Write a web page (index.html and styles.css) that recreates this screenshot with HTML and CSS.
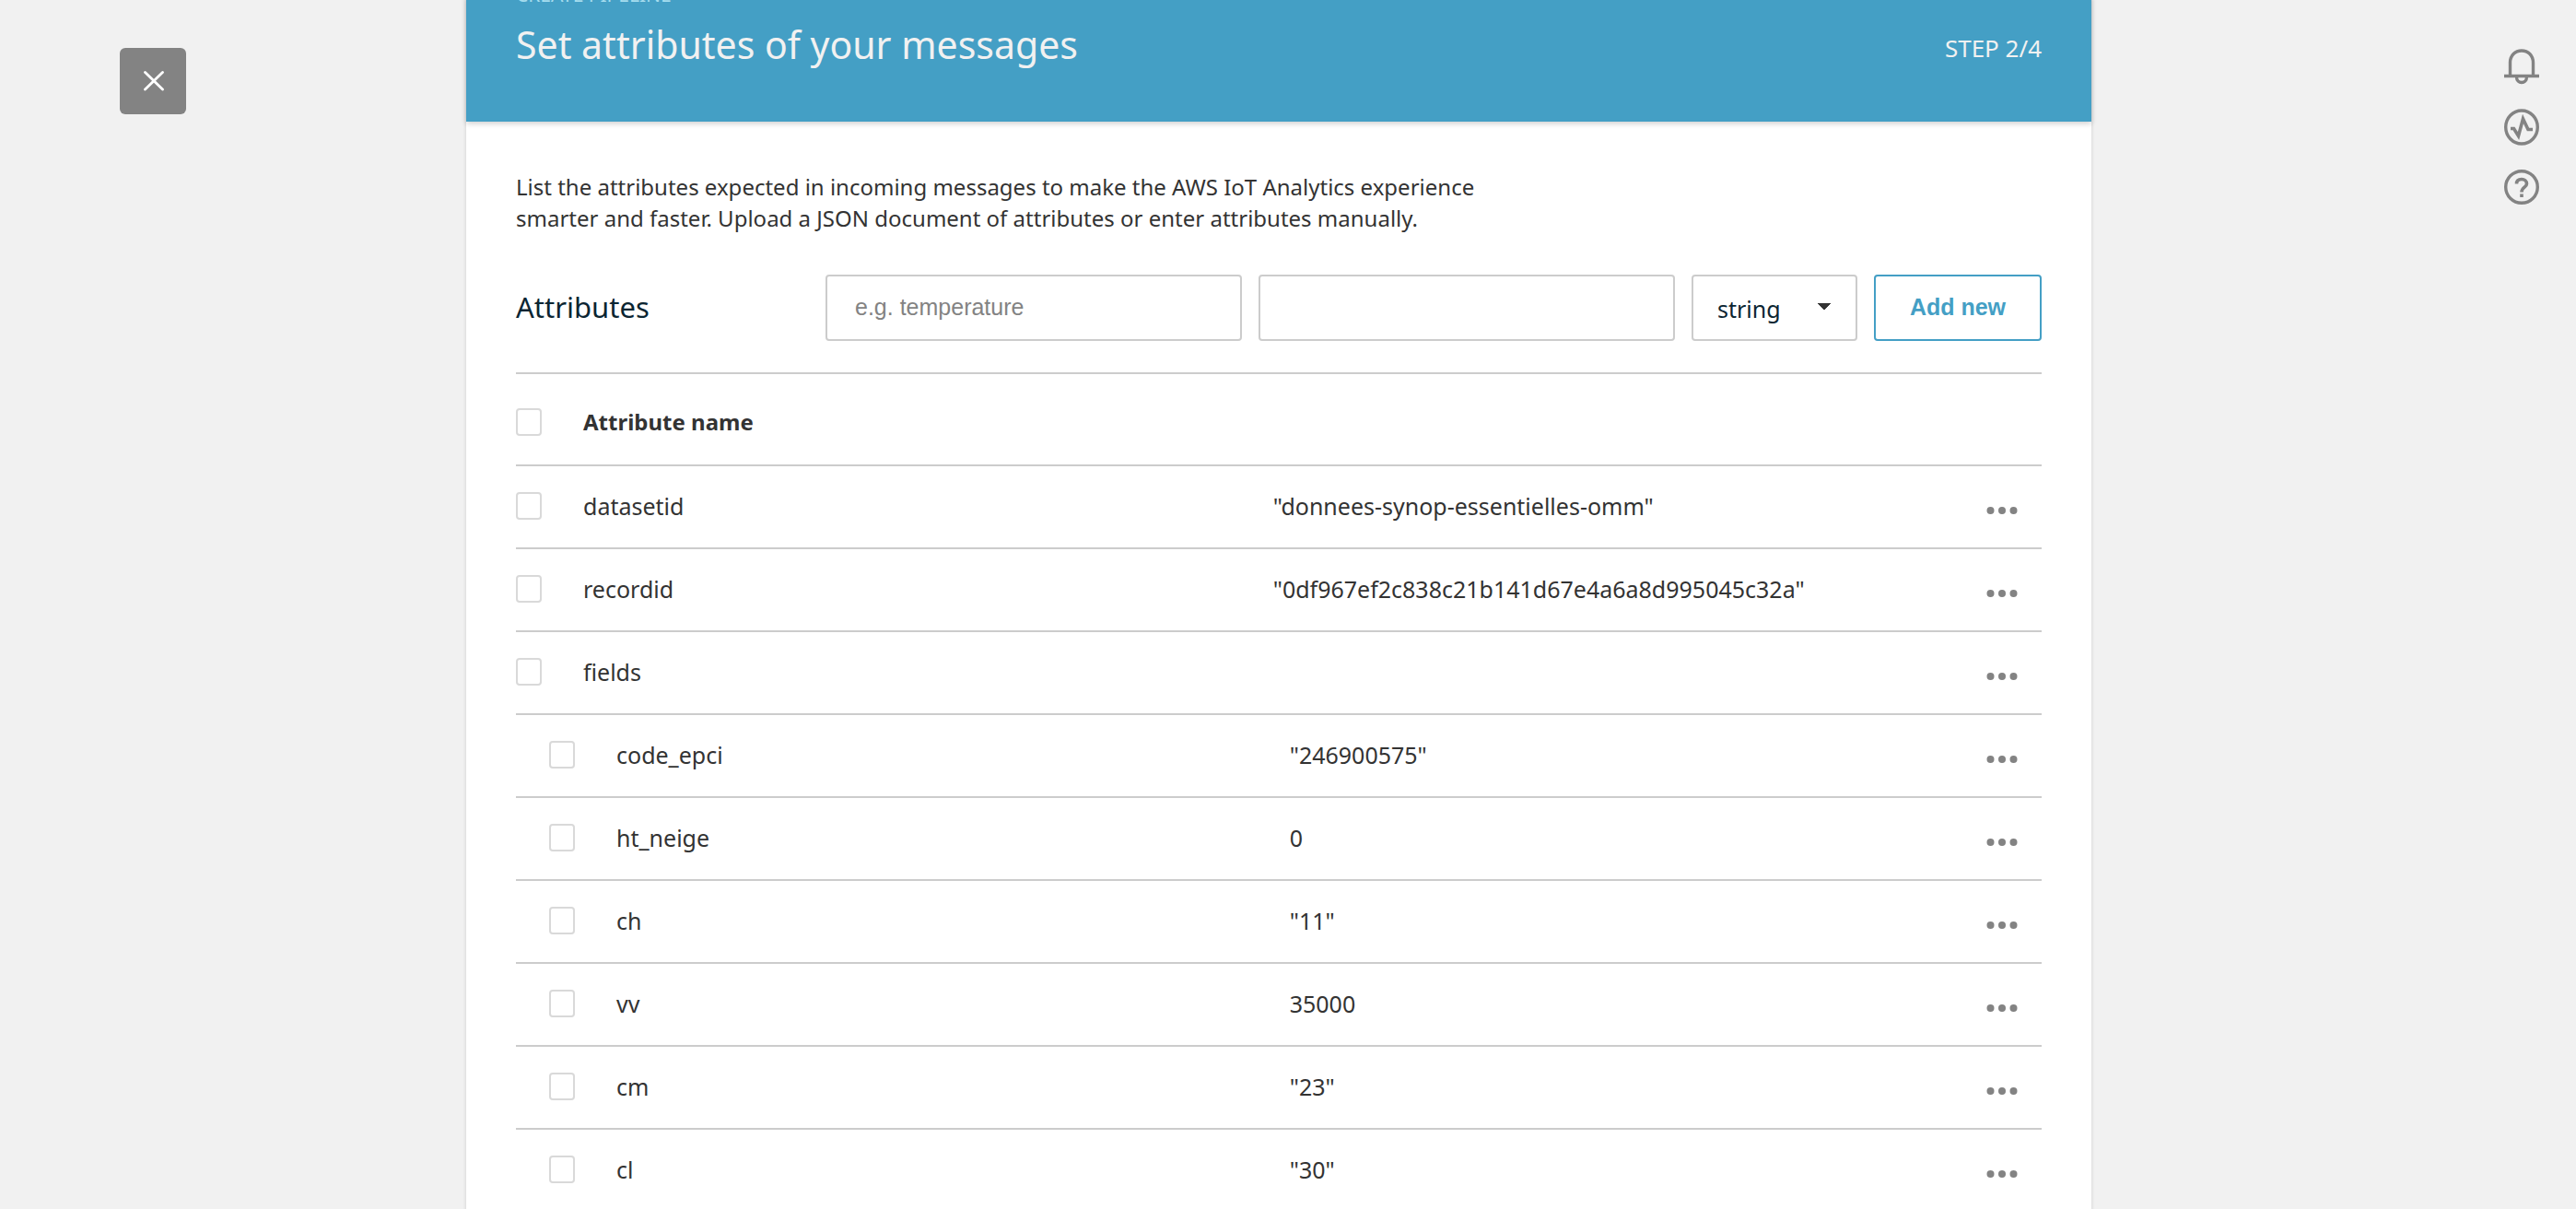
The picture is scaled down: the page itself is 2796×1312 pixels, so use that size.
FILE: index.html
```html
<!DOCTYPE html>
<html lang="en">
<head>
<meta charset="utf-8">
<title>Create pipeline</title>
<link rel="stylesheet" href="styles.css">
</head>
<body>
<div class="page">
  <div class="side">
    <button class="close" type="button" aria-label="Close">
      <svg width="24" height="24" viewBox="0 0 24 24" fill="none" stroke="#fff" stroke-width="2.8" stroke-linecap="round"><path d="M3.500 2.500 22.500 21M22.500 2.500 3.500 21"/></svg>
    </button>
  </div>

  <main class="panel">
    <header class="banner">
      <div>
        <p class="eyebrow">CREATE PIPELINE</p>
        <h1 class="title">Set attributes of your messages</h1>
      </div>
      <span class="step">STEP 2/4</span>
    </header>

    <div class="content">
      <p class="intro">List the attributes expected in incoming messages to make the AWS IoT Analytics experience<br>smarter and faster. Upload a JSON document of attributes or enter attributes manually.</p>

      <form class="form">
        <h2 class="form-title">Attributes</h2>
        <input class="field" type="text" placeholder="e.g. temperature" aria-label="Attribute name">
        <input class="field" type="text" aria-label="Attribute value">
        <select class="type" aria-label="Attribute type"><option>string</option><option>number</option><option>boolean</option></select>
        <button class="add" type="button">Add new</button>
      </form>

      <table class="attributes">
        <colgroup><col><col class="col-value"><col class="col-action"></colgroup>
        <thead>
          <tr><th scope="col"><label class="name"><input class="check" type="checkbox">Attribute name</label></th><th></th><th></th></tr>
        </thead>
        <tbody>
          <tr><td><label class="name"><input class="check" type="checkbox">datasetid</label></td><td>"donnees-synop-essentielles-omm"</td><td><button class="more" type="button" aria-label="Actions for datasetid"><svg width="34" height="10"><use href="#dots"/></svg></button></td></tr>
          <tr><td><label class="name"><input class="check" type="checkbox">recordid</label></td><td>"0df967ef2c838c21b141d67e4a6a8d995045c32a"</td><td><button class="more" type="button" aria-label="Actions for recordid"><svg width="34" height="10"><use href="#dots"/></svg></button></td></tr>
          <tr><td><label class="name"><input class="check" type="checkbox">fields</label></td><td></td><td><button class="more" type="button" aria-label="Actions for fields"><svg width="34" height="10"><use href="#dots"/></svg></button></td></tr>
          <tr class="nested"><td><label class="name"><input class="check" type="checkbox">code_epci</label></td><td>"246900575"</td><td><button class="more" type="button" aria-label="Actions for code_epci"><svg width="34" height="10"><use href="#dots"/></svg></button></td></tr>
          <tr class="nested"><td><label class="name"><input class="check" type="checkbox">ht_neige</label></td><td>0</td><td><button class="more" type="button" aria-label="Actions for ht_neige"><svg width="34" height="10"><use href="#dots"/></svg></button></td></tr>
          <tr class="nested"><td><label class="name"><input class="check" type="checkbox">ch</label></td><td>"11"</td><td><button class="more" type="button" aria-label="Actions for ch"><svg width="34" height="10"><use href="#dots"/></svg></button></td></tr>
          <tr class="nested"><td><label class="name"><input class="check" type="checkbox">vv</label></td><td>35000</td><td><button class="more" type="button" aria-label="Actions for vv"><svg width="34" height="10"><use href="#dots"/></svg></button></td></tr>
          <tr class="nested"><td><label class="name"><input class="check" type="checkbox">cm</label></td><td>"23"</td><td><button class="more" type="button" aria-label="Actions for cm"><svg width="34" height="10"><use href="#dots"/></svg></button></td></tr>
          <tr class="nested"><td><label class="name"><input class="check" type="checkbox">cl</label></td><td>"30"</td><td><button class="more" type="button" aria-label="Actions for cl"><svg width="34" height="10"><use href="#dots"/></svg></button></td></tr>
        </tbody>
      </table>
    </div>
  </main>

  <nav class="tools" aria-label="Tools">
    <button class="tool" type="button" aria-label="Notifications">
      <svg width="40" height="40" viewBox="0 0 40 40" fill="none" stroke="#838383" stroke-width="3.400"><path d="M7.500 30.500V16C7.500 8 13 3 20 3S32.500 8 32.500 16V30.500M1 30.500H39M14.500 31.500C14.500 39.500 25.500 39.500 25.500 31.500"/></svg>
    </button>
    <button class="tool" type="button" aria-label="Activity">
      <svg width="40" height="40" viewBox="0 0 40 40" fill="none" stroke="#838383" stroke-width="3.400"><ellipse cx="20" cy="20" rx="17.300" ry="18"/><path d="M8 21.500H11.500L16.500 29.500 21.500 11 27 22.500H32" stroke-width="3.600"/></svg>
    </button>
    <button class="tool" type="button" aria-label="Help">
      <svg width="40" height="40" viewBox="0 0 40 40" fill="none" stroke="#838383" stroke-width="3.400"><circle cx="20" cy="19" r="17.300"/><path d="M14.500 15.500C14.500 12 17 10.500 20 10.500S25.500 12.500 25.500 15.500C25.500 19.500 20 19 20 24.500M20 26.500V30" stroke-width="3.600"/></svg>
    </button>
  </nav>
</div>

<svg class="defs" aria-hidden="true"><symbol id="dots" viewBox="0 0 34 10"><g fill="#838383"><circle cx="4.500" cy="5" r="4"/><circle cx="17" cy="5" r="4"/><circle cx="29.500" cy="5" r="4"/></g></symbol></svg>
</body>
</html>
```
FILE: styles.css
```css
* { box-sizing: border-box; }

body {
  margin: 0;
  background: #f1f1f1;
  color: #333;
  font: 25px/34px "Noto Sans", sans-serif;
}

h1, h2, p { margin: 0; font-weight: 400; }

button { font: inherit; cursor: pointer; }

.defs { display: none; }

.page {
  display: grid;
  grid-template-columns: 1fr minmax(0, 1764px) 1fr;
  height: 100vh;
  padding-right: 20px;
  overflow: hidden;
}

.side { padding: 52px 0 0 130px; }

.close {
  display: grid;
  place-items: center;
  width: 72px;
  height: 72px;
  padding: 0;
  border: 0;
  border-radius: 6px;
  background: #838383;
}

.panel {
  background: #fff;
  box-shadow: 0 0 4px rgba(0, 0, 0, .15);
}

/* The banner's top edge is scrolled out of view. */
.banner {
  display: flex;
  justify-content: space-between;
  align-items: flex-end;
  margin-top: -54px;
  padding: 28px 54px 50px;
  background: #449fc5;
  color: #f1f1f1;
  box-shadow: 0 2px 6px rgba(0, 0, 0, .2);
}

.eyebrow { color: #a5dcee; font-size: 21px; line-height: 40px; }
.title { font-size: 41px; line-height: 68px; }
.step { font-size: 26px; line-height: 60px; }

.content { padding: 54px 54px 0; }

.intro { font-size: 24px; }

.form {
  display: flex;
  align-items: center;
  gap: 18px;
  margin-top: 44px;
  padding-bottom: 34px;
}

.form-title {
  width: 318px;
  padding-bottom: 2px;
  color: #0b2532;
  font-size: 31px;
  line-height: 40px;
}

.field, .type, .add {
  height: 72px;
  border: 2px solid #ccc;
  border-radius: 4px;
  background: #fff;
}

.field {
  flex: 1;
  min-width: 0;
  padding: 0 30px 2px;
  font: 25px "Liberation Sans", sans-serif;
}

.field::placeholder { color: #838383; }

.type {
  width: 180px;
  padding: 2px 26px 0;
  appearance: none;
  background: #fff conic-gradient(from -41deg at 50% 100%, #333 82deg, transparent 0) no-repeat 135px 29px / 14px 8px;
  color: #0b2532;
  font: inherit;
}

.add {
  width: 182px;
  padding: 0 0 2px;
  border-color: #449fc5;
  color: #449fc5;
  font: bold 25px "Liberation Sans", sans-serif;
}

.attributes {
  width: 100%;
  border-collapse: separate;
  border-spacing: 0;
  table-layout: fixed;
}

.col-value { width: 47%; }
.col-action { width: 60px; }

th, td {
  height: 90px;
  padding: 0 0 2px;
  border-bottom: 2px solid #ccc;
  text-align: left;
}

th {
  height: 102px;
  padding: 6px 0 0;
  border-top: 2px solid #ccc;
  font-size: 24px;
}

.name { display: flex; align-items: center; gap: 45px; }

.check {
  width: 28px;
  height: 30px;
  margin: 0;
  appearance: none;
  border: 2px solid #d9d9d9;
  border-radius: 4px;
}

.nested .name { padding-left: 36px; }
td:nth-child(2) { padding-left: 4px; }
.nested td:nth-child(2) { padding-left: 22px; }

.more {
  display: block;
  padding: 10px 0 0;
  border: 0;
  background: none;
}

.more svg { display: block; }

.tools {
  display: flex;
  flex-direction: column;
  align-items: flex-end;
  gap: 26px;
  padding: 52px 19px 0 0;
}

.tool { padding: 0; border: 0; background: none; }
.tool svg { display: block; }
```
